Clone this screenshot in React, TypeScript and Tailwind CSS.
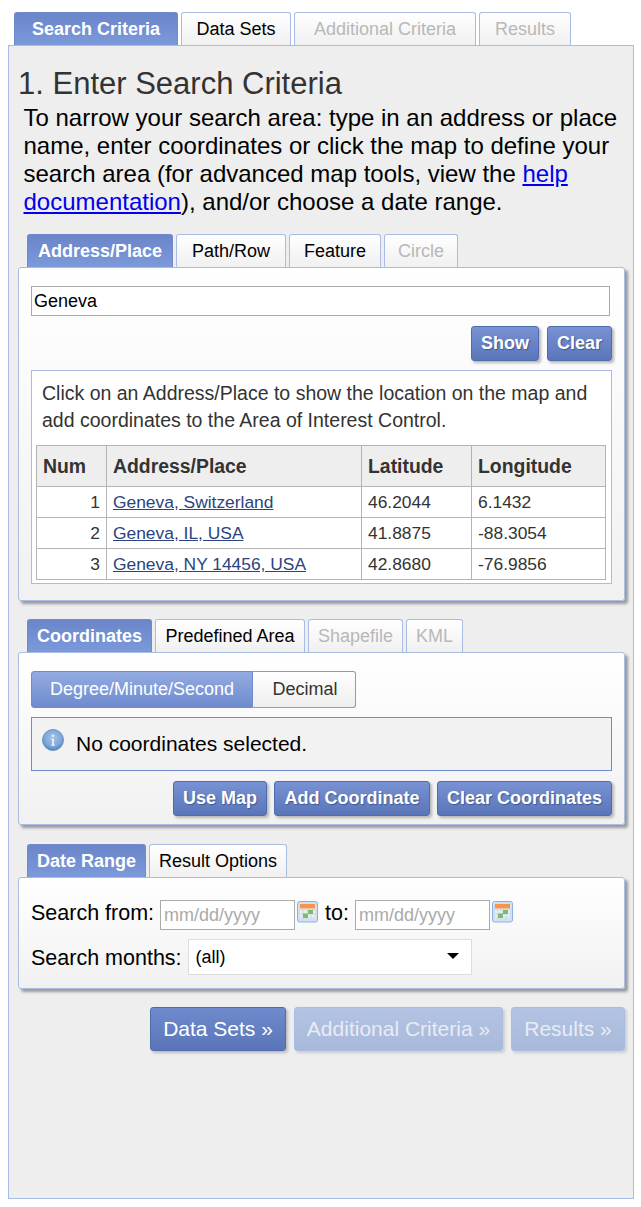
import React from "react";

type TabState = "active" | "normal" | "disabled";

interface TabItem {
  label: string;
  width: string;
  state: TabState;
}

const Tab: React.FC<{ tab: TabItem }> = ({ tab }) => {
  const stateClass =
    tab.state === "active"
      ? "font-bold text-white bg-gradient-to-b from-[#6a86c9] to-[#7c99da] border-[#6f8bce]"
      : tab.state === "normal"
        ? "text-black bg-gradient-to-b from-white to-[#f0f0f0] border-[#a9bde4]"
        : "text-[#b8b8b8] bg-gradient-to-b from-white to-[#f0f0f0] border-[#a9bde4]";
  return (
    <a
      className={`flex h-[33px] items-center justify-center rounded-t-[3px] border border-b-0 pt-[1px] text-[18px] ${tab.width} ${stateClass}`}
    >
      {tab.label}
    </a>
  );
};

const TabRow: React.FC<{ tabs: TabItem[]; indent?: string }> = ({
  tabs,
  indent = "pl-[9px]",
}) => (
  <div className={`flex gap-[3px] ${indent}`}>
    {tabs.map((tab) => (
      <Tab key={tab.label} tab={tab} />
    ))}
  </div>
);

const Panel: React.FC<{ className?: string; children: React.ReactNode }> = ({
  className,
  children,
}) => (
  <div
    className={`w-[607px] rounded-[3px] border border-[#a9bde4] bg-gradient-to-b from-white to-[#f1f1f1] px-3 shadow-[3px_3px_3px_#9a9a9a] ${className ?? ""}`}
  >
    {children}
  </div>
);

const ActionButton: React.FC<{ label: string; width: string }> = ({
  label,
  width,
}) => (
  <button
    className={`h-[35px] rounded-[3px] border border-[#4f6dae] bg-gradient-to-b from-[#7892d3] to-[#5a76b9] text-[18px] font-bold text-white shadow-[2px_2px_3px_#b5b5b5] [text-shadow:1px_1px_1px_#3f5a96] ${width}`}
  >
    {label}
  </button>
);

const CalendarIcon = () => (
  <svg
    width="21"
    height="22"
    viewBox="0 0 21 22"
    className="-mt-[7px] ml-[2px] shrink-0"
  >
    <rect x="0.5" y="0.5" width="20" height="20.5" rx="2" fill="#cfe0f5" stroke="#8fb0de" />
    <rect x="3" y="3" width="15" height="4.5" fill="#f5964f" />
    <rect x="3" y="7.5" width="15" height="1.5" fill="#f9d0a8" />
    <rect x="3" y="9" width="15" height="9" fill="#e8edf2" />
    <path d="M3 13h15M3 17h15M6 9v9M10 9v9M14 9v9" stroke="#b9c8d8" strokeWidth="0.5" fill="none" />
    <rect x="11" y="9" width="5" height="4" fill="#7dbb70" />
    <rect x="6" y="12.5" width="5" height="4.5" fill="#7dbb70" />
  </svg>
);

const InfoIcon = () => (
  <svg width="22" height="22" viewBox="0 0 22 22" className="shrink-0">
    <defs>
      <radialGradient id="infoFill" cx="0.5" cy="0.4" r="0.6">
        <stop offset="0" stopColor="#a4c4ea" />
        <stop offset="0.7" stopColor="#7ba6d8" />
        <stop offset="1" stopColor="#4b7db6" />
      </radialGradient>
    </defs>
    <circle cx="11" cy="11" r="10.5" fill="url(#infoFill)" stroke="#6f97c8" />
    <circle cx="11" cy="6.8" r="1.4" fill="#e6eef8" />
    <path d="M9.2 9.7h2.8v5.8h1v1.2H9.1v-1.2h1v-4.6h-.9z" fill="#e6eef8" />
  </svg>
);

const results = [
  { num: 1, place: "Geneva, Switzerland", lat: "46.2044", lng: "6.1432" },
  { num: 2, place: "Geneva, IL, USA", lat: "41.8875", lng: "-88.3054" },
  { num: 3, place: "Geneva, NY 14456, USA", lat: "42.8680", lng: "-76.9856" },
];

const cell = "border border-[#b4b4b4] px-[6px] text-[17.4px] text-[#333]";
const headCell = `${cell} h-[41px] bg-[#eee] pt-[1px] text-left text-[19.4px] font-bold`;
const dateInput =
  "h-[30px] w-[135px] border border-[#aaa] bg-white px-[3px] text-[18px] placeholder:text-[#aaa]";

export default function App() {
  return (
    <div className="h-[1207px] bg-white pt-3 pl-2 font-['Liberation_Sans',Arial,sans-serif] text-black">
      <TabRow
        indent="pl-[6px]"
        tabs={[
          { label: "Search Criteria", width: "w-[164px]", state: "active" },
          { label: "Data Sets", width: "w-[110px]", state: "normal" },
          { label: "Additional Criteria", width: "w-[182px]", state: "disabled" },
          { label: "Results", width: "w-[92px]", state: "disabled" },
        ]}
      />
      <div className="h-[1154px] w-[626px] border border-[#a9bde4] bg-[#eee] pt-[21px] pl-[9px]">
        <h1 className="text-[31px] leading-[34px] text-[#333]">
          1. Enter Search Criteria
        </h1>
        <p className="pt-[3px] pl-[5.5px] text-[24px] leading-[28px]">
          To narrow your search area: type in an address or place
          <br />
          name, enter coordinates or click the map to define your
          <br />
          search area (for advanced map tools, view the{" "}
          <a className="text-[#0000ee] underline">help</a>
          <br />
          <a className="text-[#0000ee] underline">documentation</a>), and/or
          choose a date range.
        </p>

        <div className="mt-[18px]">
          <TabRow
            tabs={[
              { label: "Address/Place", width: "w-[146px]", state: "active" },
              { label: "Path/Row", width: "w-[110px]", state: "normal" },
              { label: "Feature", width: "w-[92px]", state: "normal" },
              { label: "Circle", width: "w-[74px]", state: "disabled" },
            ]}
          />
          <Panel className="h-[334px] pt-[18px]">
            <input
              readOnly
              value="Geneva"
              className="block h-[30px] w-[579px] border border-[#aaa] bg-white px-[2px] text-[18px] text-black"
            />
            <div className="mt-[10px] flex justify-end gap-[8px]">
              <ActionButton label="Show" width="w-[68px]" />
              <ActionButton label="Clear" width="w-[65px]" />
            </div>
            <div className="mt-[9px] h-[214px] border border-[#a9bde4] bg-white px-[4px]">
              <p className="px-[6px] pt-[9px] text-[19.5px] leading-[27px] text-[#333]">
                Click on an Address/Place to show the location on the map and
                add coordinates to the Area of Interest Control.
              </p>
              <table className="mt-[11px] w-[570px] table-fixed border-collapse">
                <thead>
                  <tr>
                    <th className={`${headCell} w-[70px]`}>Num</th>
                    <th className={`${headCell} w-[255px]`}>Address/Place</th>
                    <th className={`${headCell} w-[110px]`}>Latitude</th>
                    <th className={headCell}>Longitude</th>
                  </tr>
                </thead>
                <tbody>
                  {results.map((row) => (
                    <tr key={row.num} className="h-[31px]">
                      <td className={`${cell} text-right`}>{row.num}</td>
                      <td className={cell}>
                        <a className="text-[#2a4480] underline">{row.place}</a>
                      </td>
                      <td className={cell}>{row.lat}</td>
                      <td className={cell}>{row.lng}</td>
                    </tr>
                  ))}
                </tbody>
              </table>
            </div>
          </Panel>
        </div>

        <div className="mt-[18px]">
          <TabRow
            tabs={[
              { label: "Coordinates", width: "w-[125px]", state: "active" },
              { label: "Predefined Area", width: "w-[150px]", state: "normal" },
              { label: "Shapefile", width: "w-[95px]", state: "disabled" },
              { label: "KML", width: "w-[57px]", state: "disabled" },
            ]}
          />
          <Panel className="h-[173px] pt-[18px]">
            <div className="flex h-[37px] text-[18px]">
              <div className="flex w-[222px] items-center justify-center rounded-l-[3px] border border-[#6f8bce] bg-gradient-to-b from-[#93abe2] to-[#6f8bce] text-white">
                Degree/Minute/Second
              </div>
              <div className="flex w-[103px] items-center justify-center rounded-r-[3px] border border-l-0 border-[#999] bg-gradient-to-b from-white to-[#eee] pl-[2px] text-[#333]">
                Decimal
              </div>
            </div>
            <div className="mt-[9px] flex h-[54px] w-[581px] items-start gap-[12px] border border-[#6f8bce] bg-[#f2f2f2] pt-[11px] pl-[10px]">
              <InfoIcon />
              <span className="pt-[2px] text-[21px] leading-[26px]">
                No coordinates selected.
              </span>
            </div>
            <div className="mt-[10px] flex w-[581px] justify-end gap-[7px]">
              <ActionButton label="Use Map" width="w-[94px]" />
              <ActionButton label="Add Coordinate" width="w-[156px]" />
              <ActionButton label="Clear Coordinates" width="w-[175px]" />
            </div>
          </Panel>
        </div>

        <div className="mt-[19px]">
          <TabRow
            tabs={[
              { label: "Date Range", width: "w-[119px]", state: "active" },
              { label: "Result Options", width: "w-[138px]", state: "normal" },
            ]}
          />
          <Panel className="h-[112px] pt-[22px]">
            <div className="flex h-[30px] items-center text-[21.5px]">
              <label className="mr-[6px] pb-[3px]">Search from:</label>
              <input readOnly placeholder="mm/dd/yyyy" className={dateInput} />
              <CalendarIcon />
              <label className="mr-[6px] ml-[7px] pb-[3px]">to:</label>
              <input readOnly placeholder="mm/dd/yyyy" className={dateInput} />
              <CalendarIcon />
            </div>
            <div className="mt-[9px] flex h-[36px] items-center text-[21.5px]">
              <label className="pt-[2px]">Search months:</label>
              <div className="ml-[6px] flex h-[36px] w-[284px] items-center justify-between border border-[#ddd] bg-white pr-[12px] pl-[7px] text-[18px]">
                <span>(all)</span>
                <span className="mb-[3px] h-0 w-0 border-x-[6px] border-t-[6px] border-x-transparent border-t-black" />
              </div>
            </div>
          </Panel>
        </div>

        <div className="mt-[18px] flex w-[607px] justify-end gap-[8px]">
          <button className="h-[44px] w-[136px] rounded-[3px] border border-[#4f6dae] bg-gradient-to-b from-[#6f8bcd] to-[#5a76b9] text-[21px] text-white shadow-[2px_2px_3px_#bbb]">
            Data Sets »
          </button>
          <button className="h-[44px] w-[209px] rounded-[3px] border border-[#a9bde4] bg-gradient-to-b from-[#b4c3e3] to-[#a8b9da] text-[21px] text-[#e8ecf4] shadow-[2px_2px_3px_#ccc]">
            Additional Criteria »
          </button>
          <button className="h-[44px] w-[114px] rounded-[3px] border border-[#a9bde4] bg-gradient-to-b from-[#b4c3e3] to-[#a8b9da] text-[21px] text-[#e8ecf4] shadow-[2px_2px_3px_#ccc]">
            Results »
          </button>
        </div>
      </div>
    </div>
  );
}
